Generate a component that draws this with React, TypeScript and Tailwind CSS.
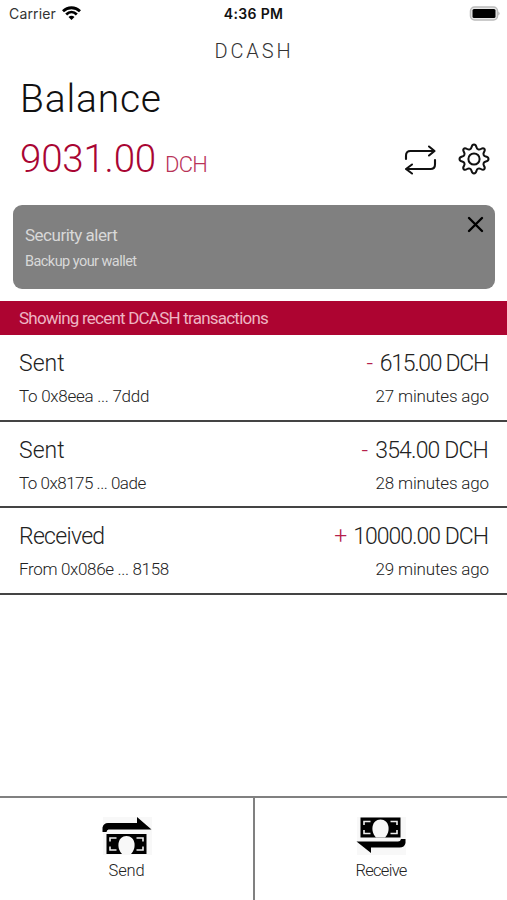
import React from "react";

const transactions = [
  { kind: "Sent", kindTrack: "tracking-normal", party: "To 0x8eea ... 7ddd", sign: "-", amount: "615.00 DCH", age: "27 minutes ago", track: "tracking-[-0.28px]", amountTrack: "tracking-[-1.300px]", gap: "gap-[8px]" },
  { kind: "Sent", kindTrack: "tracking-normal", party: "To 0x8175 ... 0ade", sign: "-", amount: "354.00 DCH", age: "28 minutes ago", track: "tracking-[-0.5px]", amountTrack: "tracking-[-0.850px]", gap: "gap-[8px]" },
  { kind: "Received", kindTrack: "tracking-[-0.700px]", party: "From 0x086e ... 8158", sign: "+", amount: "10000.00 DCH", age: "29 minutes ago", track: "tracking-[-0.340px]", amountTrack: "tracking-[-1px]", gap: "gap-[7px]" },
];

function StatusBar() {
  return (
    <div className="grid h-[28px] grid-cols-3 items-center px-[9px] font-['Inter',sans-serif] text-[14px] leading-[28px] text-[#111]">
      <div className="flex items-center gap-[6px]">
        <span className="font-normal tracking-[0.150px] text-[#333]">Carrier</span>
        <svg width="19" height="14" viewBox="0 0 19 14" className="-mt-[2px]" fill="none" stroke="#000" strokeWidth="2.8">
          <path d="M1 5.2C5.8.6 13.2.6 18 5.2" />
          <path d="M4.2 8.4C7.3 5.4 11.7 5.4 14.8 8.4" />
          <path d="M9.5 14 6.5 10.9C8.2 9.3 10.8 9.3 12.5 10.9Z" fill="#000" stroke="none" />
        </svg>
      </div>
      <span className="text-center font-semibold tracking-[0.350px] whitespace-nowrap">4:36 PM</span>
      <svg width="31" height="15" viewBox="0 0 31 15" className="-mt-[2px] -mr-[2px] justify-self-end">
        <rect x="1.5" y="1" width="27" height="13" rx="4" fill="#e8e8e8" stroke="#bbb" strokeWidth="1.5" />
        <rect x="3.500" y="3" width="23" height="9" rx="1.5" fill="#000" />
        <path d="M29.4 5.5C31 6.4 31 8.6 29.4 9.5Z" fill="#aaa" />
      </svg>
    </div>
  );
}

function Banknote() {
  return (
    <>
      <rect x="0" y="0" width="40" height="20" fill="#000" />
      <path d="M10 4H3.5V7.5M3.5 12.5V16H10M30 4H36.500V7.5M36.500 12.5V16H30" fill="none" stroke="#eee" strokeWidth="1.600" />
      <path d="M15.500 20C9.500 14 11 2 20 2S30.500 14 24.500 20Z" fill="#f8f8f8" />
    </>
  );
}

function SendIcon() {
  return (
    <svg width="50" height="38" viewBox="0 0 50 38">
      <rect x="1" y="0" width="49" height="38" fill="#f8f8f8" />
      <path d="M0.500 15V10.500Q1.500 6 6 6H35V0L49.500 12.500H6.500Q5 12.500 4.500 15Z" fill="#000" />
      <g transform="translate(4.500 17)"><Banknote /></g>
    </svg>
  );
}

function ReceiveIcon() {
  return (
    <svg width="50" height="38" viewBox="0 0 50 38">
      <rect x="1" y="0" width="49" height="38" fill="#f8f8f8" />
      <g transform="translate(4.500 0.500)"><Banknote /></g>
      <path d="M49.500 22V26Q48.500 30.500 43.500 30.500H15V36L0.500 24.500H42Q44.500 24.500 45 22Z" fill="#000" />
    </svg>
  );
}

export default function App() {
  return (
    <div className="flex h-[900px] w-[507px] flex-col overflow-hidden bg-white font-['Roboto','Liberation_Sans',sans-serif] font-light text-[#222]">
      <StatusBar />
      <h1 className="h-[46px] pl-[1px] text-center text-[20px] leading-[47px] tracking-[2.900px] text-[#333]">DCASH</h1>
      <h2 className="h-12 pl-[20px] text-[39px] leading-[50px] tracking-[0.800px] text-[#111]">Balance</h2>
      <div className="flex h-[83px] items-start justify-between pr-[17px] pl-[20px]">
        <div className="flex h-[73px] items-baseline gap-[9px] leading-[74px] text-[#a90533]">
          <span className="text-[38.500px] tracking-[-0.200px]">9031.00</span>
          <span className="text-[22px] tracking-[-0.700px] text-[#b83358]">DCH</span>
        </div>
        <div className="flex h-[75px] items-center gap-[21px]">
          <svg width="33" height="30" viewBox="0 0 33 30" fill="none" stroke="#111" strokeWidth="2.100" strokeLinecap="round" strokeLinejoin="round">
            <path d="M2 14V10.500Q2 6 6.500 6H30M25 1.500 30.500 6 25 10.500M31 15V19.500Q31 24 26.500 24H2M8 19.500 2 24 8 28.500" />
          </svg>
          <svg width="32" height="32" viewBox="0 0 32 32" fill="none" stroke="#111" strokeWidth="2" strokeLinejoin="round" className="-mt-[1px]">
            <circle cx="16" cy="16" r="5.600" />
            <path d="M13.500 4.200C14 2.200 14.500 1.500 16 1.500S18 2.200 18.500 4.200C19 6.400 21 7.200 22.900 6C24.600 4.900 25.300 4.800 26.300 5.800S27.100 7.400 26 9.100C24.800 11 25.600 13 27.800 13.500C29.800 14 30.500 14.500 30.500 16S29.800 18 27.800 18.500C25.600 19 24.800 21 26 22.900C27.100 24.600 27.200 25.300 26.200 26.300S24.600 27.100 22.900 26C21 24.800 19 25.600 18.500 27.800C18 29.800 17.500 30.500 16 30.500S14 29.800 13.500 27.800C13 25.600 11 24.800 9.100 26C7.400 27.100 6.700 27.200 5.700 26.200S4.900 24.600 6 22.900C7.200 21 6.400 19 4.200 18.500C2.200 18 1.500 17.500 1.500 16S2.200 14 4.200 13.500C6.400 13 7.200 11 6 9.100C4.900 7.400 4.800 6.700 5.800 5.700S7.400 4.900 9.100 6C11 7.200 13 6.400 13.500 4.200Z" />
          </svg>
        </div>
      </div>
      <section className="mr-[12px] ml-[13px] flex h-[84px] justify-between rounded-[9px] bg-[#808080] pt-[17px] pr-[11px] pl-[12px] font-normal text-[#d8d8d8]">
        <div>
          <p className="h-[26px] text-[17px] leading-[26px] tracking-[-0.500px]">Security alert</p>
          <p className="h-[26px] text-[14.500px] leading-[28px] tracking-[-0.550px]">Backup your wallet</p>
        </div>
        <svg width="17" height="17" viewBox="0 0 17 17" className="-mt-[6px]" stroke="#000" strokeWidth="2.400" strokeLinecap="round">
          <path d="M2 2 15 15M15 2 2 15" />
        </svg>
      </section>
      <div className="mt-[12px] h-[34px] bg-[#ad0431] pl-[19px] text-[17px] leading-[35px] font-normal tracking-[-0.780px] text-[#eeb5c3]">Showing recent DCASH transactions</div>
      <ul>
        {transactions.map((t) => (
          <li key={t.age} className="h-[86.700px] border-b-2 border-[#444] pt-[12px] pr-[18px] pl-[19px]">
            <div className="flex h-8 justify-between text-[23px] leading-[33px]">
              <span className={t.kindTrack}>{t.kind}</span>
              <span className={`flex ${t.gap} ${t.amountTrack} pr-[1px]`}><span className="text-[#b5204d]">{t.sign}</span><span>{t.amount}</span></span>
            </div>
            <div className="flex h-[34px] justify-between text-[17px] leading-[34px] text-[#222]">
              <span className={t.track}>{t.party}</span>
              <span className="tracking-[-0.150px]">{t.age}</span>
            </div>
          </li>
        ))}
      </ul>
      <nav className="mt-auto flex h-[104px] border-t-2 border-[#808080] text-[16.500px] text-[#222]">
        <button className="flex w-[255px] flex-col items-center border-r-2 border-[#808080] pt-[19px]"><SendIcon /><span className="h-[32px] leading-[31px] tracking-[-0.200px]">Send</span></button>
        <button className="flex flex-1 flex-col items-center pt-[19px]"><ReceiveIcon /><span className="h-[32px] leading-[31px] tracking-[-0.700px]">Receive</span></button>
      </nav>
    </div>
  );
}
